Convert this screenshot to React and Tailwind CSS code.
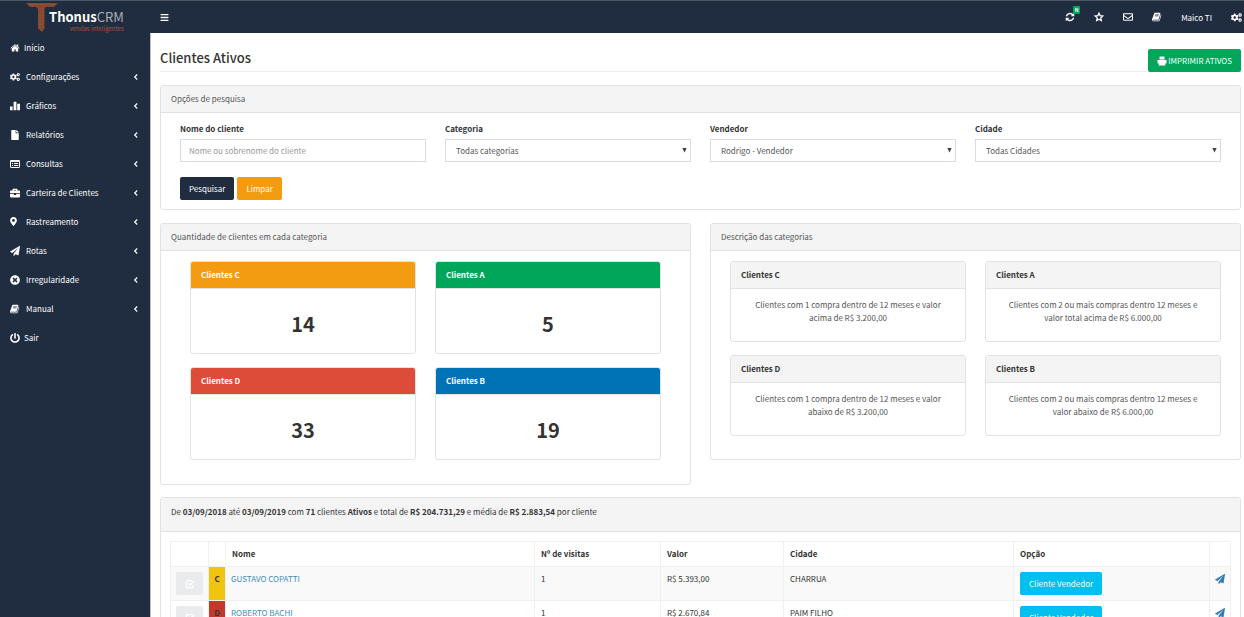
import {
  FaBars, FaBriefcase, FaCogs, FaFile, FaMapMarkerAlt,
  FaPowerOff, FaRegEnvelope, FaTimesCircle,
} from 'react-icons/fa';

function glyph(d) {
  return function Glyph({ className }) {
    return (
      <svg className={className} viewBox="0 0 1792 1792" fill="currentColor" aria-hidden="true">
        <path d={d} />
      </svg>
    );
  };
}

const BookIcon = glyph('M1639 478q40 57 18 129l-275 906q-19 64-76.500 107.500t-122.500 43.500h-923q-77 0-148.500-53.500t-99.500-131.500q-24-67-2-127 0-4 3-27t4-37q1-8-3-21.500t-3-19.500q2-11 8-21t16.500-23.500 16.500-23.500q23-38 45-91.500t30-91.500q3-10 .5-30t-.5-28q3-11 17-28t17-23q21-36 42-92t25-90q1-9-2.500-32t.5-28q4-13 22-30.500t22-22.500q19-26 42.500-84.500t27.500-96.500q1-8-3-25.500t-2-26.500q2-8 9-18t18-23 17-21q8-12 16.500-30.500t15-35 16-36 19.500-32 26.500-23.500 36-11.500 47.500 5.500l-1 3q38-9 51-9h761q74 0 114 56t18 130l-274 906q-36 119-71.500 153.500t-128.500 34.500h-869q-27 0-38 15-11 16-1 43 24 70 144 70h923q29 0 56-15.500t35-41.500l300-987q7-22 5-57 38 15 59 43zm-1064 2q-4 13 2 22.500t20 9.500h608q13 0 25.500-9.500t16.500-22.500l21-64q4-13-2-22.500t-20-9.500h-608q-13 0-25.500 9.500t-16.500 22.500zm-83 256q-4 13 2 22.500t20 9.500h608q13 0 25.500-9.500t16.500-22.500l21-64q4-13-2-22.500t-20-9.500h-608q-13 0-25.500 9.500t-16.500 22.500z');
const HomeIcon = glyph('M1472 992v480q0 26-19 45t-45 19h-384v-384h-256v384h-384q-26 0-45-19t-19-45v-480q0-1 .5-3t.5-3l575-474 575 474q1 2 1 6zm223-69l-62 74q-8 9-21 11h-3q-13 0-21-7l-692-577-692 577q-12 8-24 7-13-2-21-11l-62-74q-8-10-7-23.500t11-21.500l719-599q32-26 76-26t76 26l244 204v-195q0-14 9-23t23-9h192q14 0 23 9t9 23v408l219 182q10 8 11 21.500t-7 23.500z');
const PlaneIcon = glyph('M1764 11q33 24 27 64l-256 1536q-5 29-32 45-14 8-31 8-11 0-24-5l-453-185-242 295q-18 23-49 23-13 0-22-4-19-7-30.500-23.500t-11.500-36.500v-349l864-1059-1069 925-395-162q-37-14-40-55-2-40 32-59l1664-960q15-9 32-9 20 0 36 11z');
const RefreshIcon = glyph('M1639 1056q0 5-1 7-64 268-268 434.500t-478 166.500q-146 0-282.500-55t-243.500-157l-129 129q-19 19-45 19t-45-19-19-45v-448q0-26 19-45t45-19h448q26 0 45 19t19 45-19 45l-137 137q71 66 161 102t187 36q134 0 250-65t186-179q11-17 53-117 8-23 30-23h192q13 0 22.500 9.500t9.500 22.500zm25-800v448q0 26-19 45t-45 19h-448q-26 0-45-19t-19-45 19-45l138-138q-148-137-349-137-134 0-250 65t-186 179q-11 17-53 117-8 23-30 23h-199q-13 0-22.500-9.500t-9.500-22.500v-7q65-268 270-434.500t480-166.500q146 0 284 55.500t245 156.500l130-129q19-19 45-19t45 19 19 45z');

function StatsIcon({ className }) {
  return (
    <svg className={className} viewBox="0 0 10 10" fill="currentColor" aria-hidden="true">
      <path d="M0 5.500h2.600v3.800H0zM3.600 .8h2.800v8.500H3.600zM7.200 2.800H10v6.500H7.200z" />
    </svg>
  );
}

function ListIcon({ className }) {
  return (
    <svg className={className} viewBox="0 0 10 10" fill="none" stroke="currentColor" aria-hidden="true">
      <rect x="0.500" y="1.500" width="9" height="7" rx="0.500" />
      <path d="M0.500 2.200h9" strokeWidth="1.500" />
      <path d="M2 4.500h1M4 4.500h4.200M2 6.500h1M4 6.500h4.200" />
    </svg>
  );
}

function StarIcon({ className }) {
  return (
    <svg className={className} viewBox="0 0 10 10" fill="none" stroke="currentColor" strokeWidth="1.300" aria-hidden="true">
      <path d="M5 1.200l1.100 2.500 2.700.3-2 1.900.5 2.700L5 7.300 2.700 8.600l.5-2.700-2-1.900 2.700-.3z" />
    </svg>
  );
}

function PrintIcon({ className }) {
  return (
    <svg className={className} viewBox="0 0 10 10" fill="currentColor" aria-hidden="true">
      <path d="M2.500 .5h5v3h-5zM.5 4h9v3.500H8L8.500 9.500h-7L2 7.500H.5z" />
    </svg>
  );
}

function ChevronIcon({ className }) {
  return (
    <svg className={className} viewBox="0 0 8 8" fill="none" stroke="currentColor" strokeWidth="1.200" aria-hidden="true">
      <path d="M5.200 1.500L2.700 4l2.500 2.500" />
    </svg>
  );
}

function CheckIcon({ className }) {
  return (
    <svg className={className} viewBox="0 0 12 12" fill="none" stroke="currentColor" strokeWidth="1.500" aria-hidden="true">
      <path d="M8.500 1.800H3A1.500 1.500 0 0 0 1.500 3.300v5.400A1.500 1.500 0 0 0 3 10.200h5.400a1.500 1.500 0 0 0 1.500-1.500V7" />
      <path d="M3.800 5.200l2.200 2.200 5-5" strokeWidth="2" />
    </svg>
  );
}

function Logo() {
  return (
    <a href="#inicio" className="flex h-8 items-start pl-[25px]">
      <svg className="h-[31px] w-[33px] shrink-0" viewBox="0 0 33 31" fill="none" aria-hidden="true">
        <path d="M1 2h32l-4 4h-8l-1.500 2v19.500L17 31l-4-3.500V8l-2-2H5z" fill="#7d4a33" />
        <path d="M15 7v20M18 7v20" stroke="#b5482a" strokeWidth="1" strokeDasharray="2 1" />
        <path d="M3 3.500h27" stroke="#8d5237" strokeWidth="1" />
      </svg>
      <div className="-ml-[9px] flex flex-col items-end pt-[7px]">
        <span className="text-[13px] leading-[18px] text-[#a9b0b8]">
          <b className="text-white">Thonus</b>CRM
        </span>
        <span className="text-[6px] leading-[6px] text-[#a5563a]">vendas inteligentes</span>
      </div>
    </a>
  );
}

const menu = [
  { label: 'Início', icon: HomeIcon, single: true },
  { label: 'Configurações', icon: FaCogs },
  { label: 'Gráficos', icon: StatsIcon },
  { label: 'Relatórios', icon: FaFile },
  { label: 'Consultas', icon: ListIcon },
  { label: 'Carteira de Clientes', icon: FaBriefcase },
  { label: 'Rastreamento', icon: FaMapMarkerAlt, narrow: true },
  { label: 'Rotas', icon: PlaneIcon },
  { label: 'Irregularidade', icon: FaTimesCircle },
  { label: 'Manual', icon: BookIcon },
  { label: 'Sair', icon: FaPowerOff, single: true },
];

const totals = [
  { name: 'Clientes C', count: 14, color: 'bg-[#f39c12]' },
  { name: 'Clientes A', count: 5, color: 'bg-[#00a65a]' },
  { name: 'Clientes D', count: 33, color: 'bg-[#dd4b39]' },
  { name: 'Clientes B', count: 19, color: 'bg-[#0073b7]' },
];

const descriptions = [
  { name: 'Clientes C', text: 'Clientes com 1 compra dentro de 12 meses e valor acima de R$ 3.200,00' },
  { name: 'Clientes A', text: 'Clientes com 2 ou mais compras dentro 12 meses e valor total acima de R$ 6.000,00' },
  { name: 'Clientes D', text: 'Clientes com 1 compra dentro de 12 meses e valor abaixo de R$ 3.200,00' },
  { name: 'Clientes B', text: 'Clientes com 2 ou mais compras dentro 12 meses e valor abaixo de R$ 6.000,00' },
];

const clients = [
  { category: 'C', color: 'bg-[#f1c40f]', name: 'GUSTAVO COPATTI', visits: 1, value: 'R$ 5.393,00', city: 'CHARRUA' },
  { category: 'D', color: 'bg-[#c0392b]', name: 'ROBERTO BACHI', visits: 1, value: 'R$ 2.670,84', city: 'PAIM FILHO' },
];

function Sidebar() {
  return (
    <aside className="w-[150px] shrink-0 bg-[#202d40] text-white">
      <Logo />
      <nav>
        <ul>
          {menu.map(({ label, icon: Icon, single, narrow }) => (
            <li key={label}>
              <a href="#menu" className="flex h-[29px] items-center px-[10px]">
                <span className={single ? 'w-[14px]' : 'w-4'}>
                  <Icon className={narrow ? 'h-[9px] w-[7px]' : 'size-[10px]'} />
                </span>
                <span>{label}</span>
                {!single && <ChevronIcon className="ml-auto size-2" />}
              </a>
            </li>
          ))}
        </ul>
      </nav>
    </aside>
  );
}

function Topbar() {
  return (
    <header className="flex h-8 shrink-0 items-center bg-[#202d40] pl-[10px] text-white">
      <button type="button" aria-label="Menu"><FaBars className="size-[9px]" /></button>
      <div className="ml-auto flex items-center gap-[19px]">
        <button type="button" aria-label="Sincronizar" className="relative">
          <RefreshIcon className="size-[10px]" />
          <span className="absolute -top-[6px] left-2 flex h-2 w-[7px] items-center justify-center rounded-[1px] bg-[#00a65a] text-[5px] leading-[8px] font-bold">N</span>
        </button>
        <button type="button" aria-label="Favoritos"><StarIcon className="size-[10px]" /></button>
        <button type="button" aria-label="Mensagens"><FaRegEnvelope className="size-[10px]" /></button>
        <button type="button" aria-label="Manual"><BookIcon className="size-[10px]" /></button>
        <a href="#perfil">Maico TI</a>
        <button type="button" aria-label="Ajustes" className="pr-[2px]"><FaCogs className="size-[11px]" /></button>
      </div>
    </header>
  );
}

function Panel({ title, headClass = 'bg-[#f4f4f4] text-[#555]', className = '', children }) {
  return (
    <section className={`rounded-[3px] border border-[#e2e2e2] bg-white ${className}`}>
      <h2 className={`rounded-t-[2px] border-b border-[#e2e2e2] px-[10px] py-[6px] leading-[14px] ${headClass}`}>{title}</h2>
      {children}
    </section>
  );
}

function SelectField({ id, label, value }) {
  return (
    <div>
      <label htmlFor={id} className="mb-1 block leading-[12px] font-bold text-[#333]">{label}</label>
      <div className="relative">
        <select id={id} className="block h-[23px] w-full appearance-none border border-[#d8dbe2] bg-white px-[10px] text-[#555]">
          <option>{value}</option>
        </select>
        <svg className="pointer-events-none absolute top-[9px] right-1 h-[5px] w-[5px]" viewBox="0 0 5 5" fill="#444" aria-hidden="true">
          <path d="M0.300 0h4.400L2.500 4.500z" />
        </svg>
      </div>
    </div>
  );
}

export default function App() {
  return (
    <div className="flex h-screen overflow-hidden border-t border-[#4b5966] bg-white font-['Noto_Sans_CJK_SC','Noto_Sans',sans-serif] text-[8px] leading-[13px] text-[#333]">
      <Sidebar />
      <div className="flex min-w-0 flex-1 flex-col">
        <Topbar />
        <main className="flex-1 border-l border-[#b8bec8] pr-[3px] pl-[9px]">
          <div className="flex items-start pt-4">
            <h1 className="flex-1 border-b border-[#eee] pb-[5px] text-[13px] leading-[17px] font-medium">Clientes Ativos</h1>
            <button type="button" className="flex h-[23px] items-center gap-px rounded-[2px] bg-[#00a65a] px-[9px] text-white">
              <PrintIcon className="size-[10px]" /> IMPRIMIR ATIVOS
            </button>
          </div>

          <Panel title="Opções de pesquisa" className="mt-[13px]">
            <form className="px-[19px] pt-[10px] pb-[9px]" onSubmit={(e) => e.preventDefault()}>
              <div className="grid grid-cols-4 gap-x-[19px]">
                <div>
                  <label htmlFor="nome" className="mb-1 block leading-[12px] font-bold text-[#333]">Nome do cliente</label>
                  <input id="nome" type="text" placeholder="Nome ou sobrenome do cliente" className="block h-[23px] w-full border border-[#d8dbe2] px-2 placeholder:text-[#999]" />
                </div>
                <SelectField id="categoria" label="Categoria" value="Todas categorias" />
                <SelectField id="vendedor" label="Vendedor" value="Rodrigo - Vendedor" />
                <SelectField id="cidade" label="Cidade" value="Todas Cidades" />
              </div>
              <div className="mt-[15px] flex gap-[3px]">
                <button type="submit" className="h-[23px] rounded-[2px] bg-[#202d40] px-[9px] text-white">Pesquisar</button>
                <button type="reset" className="h-[23px] rounded-[2px] bg-[#f39c12] px-[9px] text-white">Limpar</button>
              </div>
            </form>
          </Panel>

          <div className="mt-[13px] grid grid-cols-2 items-start gap-[19px]">
            <Panel title="Quantidade de clientes em cada categoria">
              <div className="grid grid-cols-2 gap-x-[19px] gap-y-[13px] px-[29px] pt-[10px] pb-6">
                {totals.map((item) => (
                  <Panel key={item.name} title={item.name} headClass={`${item.color} font-bold text-white`}>
                    <p className="pt-[21px] pb-4 text-center text-xl leading-[27px] font-bold">{item.count}</p>
                  </Panel>
                ))}
              </div>
            </Panel>
            <Panel title="Descrição das categorias">
              <div className="grid grid-cols-2 gap-x-[19px] gap-y-[13px] px-[19px] pt-[10px] pb-[23px]">
                {descriptions.map((item) => (
                  <Panel key={item.name} title={item.name} headClass="bg-[#f4f4f4] font-bold text-[#333]">
                    <p className="px-[19px] pt-[9px] pb-[17px] text-center text-[#555]">{item.text}</p>
                  </Panel>
                ))}
              </div>
            </Panel>
          </div>

          <section className="mt-3 rounded-[3px] border border-[#e2e2e2]">
            <p className="border-b border-[#e2e2e2] bg-[#f4f4f4] px-[10px] pt-[7px] pb-[13px]">
              De <b>03/09/2018</b> até <b>03/09/2019</b> com <b>71</b> clientes <b>Ativos</b> e total de <b>R$ 204.731,29</b> e média de <b>R$ 2.883,54</b> por cliente
            </p>
            <div className="p-[9px]">
              <table className="w-full table-fixed border-collapse text-left [&_td]:border [&_td]:border-[#f0f0f0] [&_th]:border [&_th]:border-[#f0f0f0]">
                <colgroup>
                  <col className="w-[38px]" />
                  <col className="w-[17px]" />
                  <col />
                  <col className="w-[126px]" />
                  <col className="w-[123px]" />
                  <col className="w-[230px]" />
                  <col className="w-[196px]" />
                  <col className="w-[21px]" />
                </colgroup>
                <thead>
                  <tr className="h-[25px] align-top">
                    <th /><th />
                    <th className="px-[6px] py-[5px]">Nome</th>
                    <th className="px-[6px] py-[5px]">Nº de visitas</th>
                    <th className="px-[6px] py-[5px]">Valor</th>
                    <th className="px-[6px] py-[5px]">Cidade</th>
                    <th className="px-[6px] py-[5px]">Opção</th>
                    <th />
                  </tr>
                </thead>
                <tbody>
                  {clients.map((client) => (
                    <tr key={client.name} className="align-top odd:bg-[#f9f9f9]">
                      <td className="px-[5px] py-[5px]">
                        <button type="button" aria-label="Selecionar" className="flex h-[23px] w-[27px] items-center justify-center rounded-[2px] bg-[#e9ebec] text-white">
                          <CheckIcon className="size-[10px]" />
                        </button>
                      </td>
                      <td className={`py-[5px] text-center font-bold ${client.color}`}>{client.category}</td>
                      <td className="px-[5px] py-[5px]"><a href="#cliente" className="text-[#3c8dbc]">{client.name}</a></td>
                      <td className="px-[6px] py-[5px]">{client.visits}</td>
                      <td className="px-[6px] py-[5px]">{client.value}</td>
                      <td className="px-[6px] py-[5px]">{client.city}</td>
                      <td className="px-[6px] py-[5px]">
                        <button type="button" className="h-[23px] rounded-[2px] bg-[#00c0ef] px-[9px] text-white">Cliente Vendedor</button>
                      </td>
                      <td className="px-[5px] py-[7px]">
                        <a href="#rota" aria-label="Rota"><PlaneIcon className="size-[10px] text-[#337ab7]" /></a>
                      </td>
                    </tr>
                  ))}
                </tbody>
              </table>
            </div>
          </section>
        </main>
      </div>
    </div>
  );
}
